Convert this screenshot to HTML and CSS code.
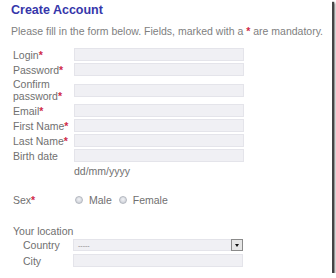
FILE: index.html
```html
<!DOCTYPE html>
<html lang="en">

<head>
    <meta charset="UTF-8">
    <meta name="viewport" content="width=device-width, initial-scale=1.0">
    <title>Create Account</title>
    <link rel="stylesheet" href="styles.css">
</head>

<body>
    <div class="frame">
        <h1 class="title">Create Account</h1>
        <p class="intro">Please fill in the form below. Fields, marked with a <em>*</em> are mandatory.</p>

        <div class="fields">
            <label>Login<em>*</em></label>
            <input type="text">
            <label>Password<em>*</em></label>
            <input type="password">
            <label class="two-line">Confirm password<em>*</em></label>
            <input type="password">
            <label>Email<em>*</em></label>
            <input type="text">
            <label>First Name<em>*</em></label>
            <input type="text">
            <label>Last Name<em>*</em></label>
            <input type="text">
            <label>Birth date</label>
            <input type="text">
            <span></span>
            <span class="hint">dd/mm/yyyy</span>
        </div>

        <div class="sex">
            <label>Sex<em>*</em></label>
            <div class="radios">
                <span class="radio"></span><span>Male</span>
                <span class="radio"></span><span>Female</span>
            </div>
        </div>

        <div class="location">
            <div class="heading">Your location</div>
            <div class="fields sub">
                <label>Country</label>
                <div class="select">
                    <span class="value">-----</span>
                    <span class="arrow"></span>
                </div>
                <label>City</label>
                <input type="text">
            </div>
        </div>
    </div>
</body>

</html>
```

FILE: styles.css
```css
* {
    margin: 0;
    padding: 0;
    box-sizing: border-box;
}

body {
    background: #fff;
    font-family: "Liberation Sans", Arial, sans-serif;
    font-size: 10.5px;
    color: #707070;
}

.frame {
    width: 332px;
    height: 273px;
    background: #fff;
    padding-left: 11px;
    box-shadow: 2px 2px 1px #444, 3px 3px 2px rgba(0, 0, 0, 0.5);
}

em {
    font-style: normal;
    font-weight: bold;
    color: #d02a48;
}

.title {
    padding-top: 3px;
    font-size: 12.5px;
    line-height: 14px;
    font-weight: bold;
    color: #3636aa;
}

.intro {
    margin-top: 8px;
    line-height: 12px;
    color: #808080;
}

.fields {
    display: grid;
    grid-template-columns: 61px 170px;
    row-gap: 2px;
    align-items: center;
    margin-top: 11px;
    padding-left: 2px;
}

.fields label {
    line-height: 12px;
}

.fields input,
.select {
    height: 13px;
    width: 170px;
    border: 1px solid #e4e4ea;
    background: #f0f0f4;
    outline: none;
}

.two-line {
    width: 52px;
}

.hint {
    line-height: 12px;
    padding-top: 1px;
}

.sex {
    display: flex;
    align-items: center;
    margin-top: 16px;
    padding-left: 2px;
    height: 14px;
}

.sex label {
    width: 62px;
}

.radios {
    display: flex;
    align-items: center;
}

.radio {
    width: 8px;
    height: 8px;
    border-radius: 50%;
    border: 1px solid #b4b8c0;
    background: radial-gradient(circle at 50% 40%, #f2f3f6, #c4c8d0);
    margin-right: 6px;
}

.radio ~ .radio {
    margin-left: 7px;
}

.location {
    margin-top: 18px;
    padding-left: 2px;
}

.heading {
    line-height: 12px;
}

.fields.sub {
    margin-top: 2px;
    padding-left: 0;
    grid-template-columns: 60px 170px;
    row-gap: 3px;
}

.fields.sub label {
    padding-left: 10px;
}

.select {
    display: flex;
    align-items: center;
    justify-content: space-between;
    height: 12px;
}

.select .value {
    font-size: 7px;
    color: #888;
    padding-left: 4px;
}

.arrow {
    width: 12px;
    height: 12px;
    margin-right: -1px;
    border: 1px solid #8a8a8a;
    background: #e6e6e6;
    position: relative;
}

.arrow::after {
    content: "";
    position: absolute;
    left: 3px;
    top: 4px;
    border-left: 2px solid transparent;
    border-right: 2px solid transparent;
    border-top: 3px solid #111;
}
```
